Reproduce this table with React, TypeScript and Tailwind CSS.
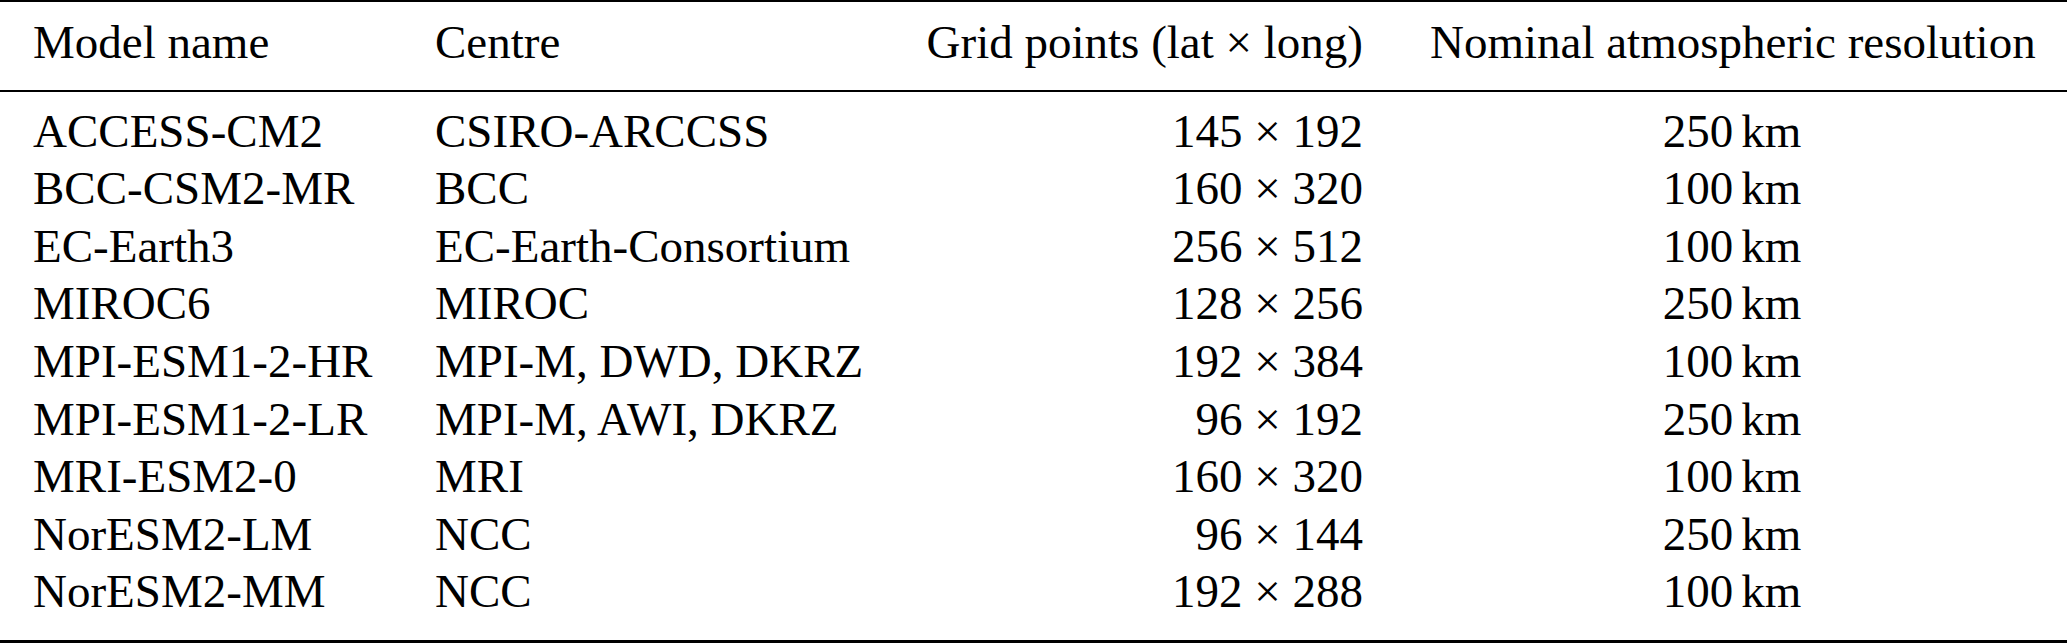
const rows = [
  ['ACCESS-CM2', 'CSIRO-ARCCSS', '145', '192', '250'],
  ['BCC-CSM2-MR', 'BCC', '160', '320', '100'],
  ['EC-Earth3', 'EC-Earth-Consortium', '256', '512', '100'],
  ['MIROC6', 'MIROC', '128', '256', '250'],
  ['MPI-ESM1-2-HR', 'MPI-M, DWD, DKRZ', '192', '384', '100'],
  ['MPI-ESM1-2-LR', 'MPI-M, AWI, DKRZ', '96', '192', '250'],
  ['MRI-ESM2-0', 'MRI', '160', '320', '100'],
  ['NorESM2-LM', 'NCC', '96', '144', '250'],
  ['NorESM2-MM', 'NCC', '192', '288', '100'],
];

function Row({ cells }: { cells: string[] }) {
  const [model, centre, lat, lon, res] = cells;
  return (
    <div className="grid grid-cols-[402px_472px_523px_670px]">
      <div className="pl-[33px] whitespace-nowrap">{model}</div>
      <div className="pl-[33px] whitespace-nowrap">{centre}</div>
      <div className="pr-[34px] text-right whitespace-nowrap">
        {lat} × {lon}
      </div>
      <div className="px-[33px] text-center whitespace-nowrap">
        {res}
        <span className="inline-block w-[8px]" />
        km
      </div>
    </div>
  );
}

export default function App() {
  return (
    <div className="w-[2067px] h-[643px] bg-white text-black font-['Liberation_Serif','Times_New_Roman',serif] text-[47px] leading-[57.6px]">
      <div className="border-t-2 border-black pt-3 pb-[18px]">
        <div className="grid grid-cols-[402px_472px_523px_670px]">
          <div className="pl-[33px] whitespace-nowrap">Model name</div>
          <div className="pl-[33px] whitespace-nowrap">Centre</div>
          <div className="pr-[34px] text-right whitespace-nowrap">Grid points (lat × long)</div>
          <div className="px-[33px] text-center whitespace-nowrap">Nominal atmospheric resolution</div>
        </div>
      </div>
      <div className="border-t-2 border-b-[3px] border-black pt-[11px] pb-[19px]">
        {rows.map((r) => (
          <Row key={r[0]} cells={r} />
        ))}
      </div>
    </div>
  );
}
